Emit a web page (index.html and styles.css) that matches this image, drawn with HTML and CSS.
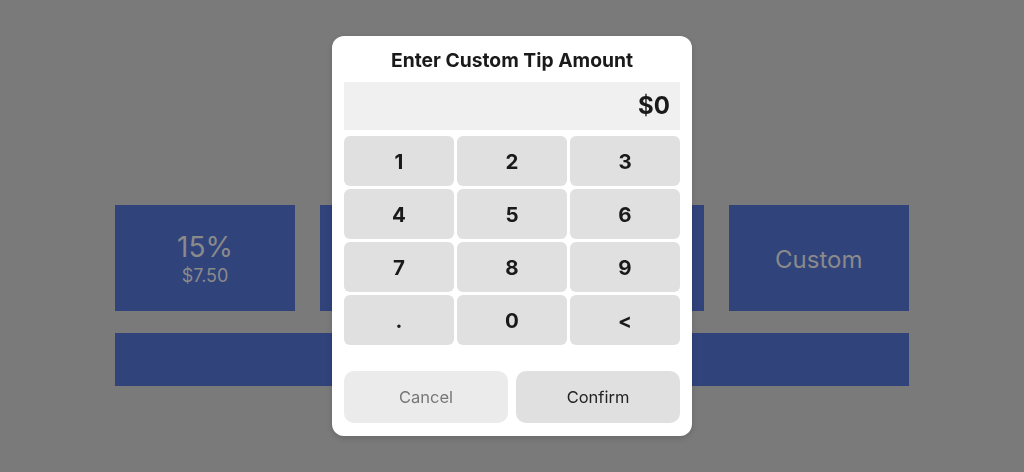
FILE: index.html
```html
<!DOCTYPE html>
<html lang="en">
<head>
    <meta charset="UTF-8">
    <meta name="viewport" content="width=device-width, initial-scale=1.0">
    <title>Tip</title>
    <link rel="stylesheet" href="styles.css">
</head>
<body>
    <div class="page">
        <div class="tips">
            <div class="tip">
                <div class="tip-pct">15%</div>
                <div class="tip-amt">$7.50</div>
            </div>
            <div class="tip">
                <div class="tip-pct">18%</div>
                <div class="tip-amt">$9.00</div>
            </div>
            <div class="tip">
                <div class="tip-pct">20%</div>
                <div class="tip-amt">$10.00</div>
            </div>
            <div class="tip">
                <div class="tip-custom">Custom</div>
            </div>
        </div>
        <div class="no-tip"></div>
    </div>

    <div class="overlay">
        <div class="modal">
            <div class="modal-title">Enter Custom Tip Amount</div>
            <div class="display">$0</div>
            <div class="keypad">
                <button class="key">1</button>
                <button class="key">2</button>
                <button class="key">3</button>
                <button class="key">4</button>
                <button class="key">5</button>
                <button class="key">6</button>
                <button class="key">7</button>
                <button class="key">8</button>
                <button class="key">9</button>
                <button class="key">.</button>
                <button class="key">0</button>
                <button class="key">&lt;</button>
            </div>
            <div class="actions">
                <button class="btn btn-cancel">Cancel</button>
                <button class="btn btn-confirm">Confirm</button>
            </div>
        </div>
    </div>
</body>
</html>
```

FILE: styles.css
```css
* {
    margin: 0;
    padding: 0;
    box-sizing: border-box;
}

body {
    font-family: 'Inter', 'Liberation Sans', sans-serif;
    background-color: #7a7a7a;
    width: 1024px;
    height: 472px;
    overflow: hidden;
}

.page {
    width: 794px;
    margin: 0 auto;
    padding-top: 205px;
}

.tips {
    display: grid;
    grid-template-columns: repeat(4, 180px);
    column-gap: 24.6px;
}

.tip {
    height: 106px;
    background-color: #31437b;
    color: #8a8a8a;
    display: flex;
    flex-direction: column;
    justify-content: center;
    align-items: center;
}

.tip-pct {
    font-size: 28px;
    line-height: 32px;
    margin-top: 2px;
}

.tip-amt {
    font-size: 18px;
    line-height: 22px;
    margin-top: 2px;
}

.tip-custom {
    font-size: 24px;
    margin-top: 2px;
}

.no-tip {
    margin-top: 22px;
    height: 53px;
    background-color: #31437b;
}

.overlay {
    position: fixed;
    inset: 0;
    display: flex;
    justify-content: center;
    align-items: center;
}

.modal {
    width: 360px;
    height: 400px;
    background-color: #fff;
    border-radius: 12px;
    padding: 12px 12px 13px;
    box-shadow: 0 2px 6px rgba(0, 0, 0, 0.15);
}

.modal-title {
    text-align: center;
    font-size: 19.3px;
    font-weight: 700;
    line-height: 24px;
    color: #1a1a1a;
    margin-bottom: 10px;
}

.display {
    height: 48px;
    background-color: #f0f0f0;
    text-align: right;
    padding-right: 10px;
    font-size: 24px;
    font-weight: 700;
    line-height: 48px;
    color: #1a1a1a;
    margin-bottom: 6px;
}

.keypad {
    display: grid;
    grid-template-columns: repeat(3, 1fr);
    grid-auto-rows: 50px;
    gap: 3px;
}

.key {
    border: none;
    border-radius: 6px;
    background-color: #e0e0e0;
    font-family: inherit;
    font-size: 20.5px;
    font-weight: 700;
    color: #1a1a1a;
}

.actions {
    display: flex;
    gap: 8px;
    margin-top: 26px;
}

.btn {
    flex: 1;
    height: 52px;
    border: none;
    border-radius: 10px;
    font-family: inherit;
    font-size: 16.5px;
}

.btn-cancel {
    background-color: #ebebeb;
    color: #777;
}

.btn-confirm {
    background-color: #e0e0e0;
    color: #222;
}
```
